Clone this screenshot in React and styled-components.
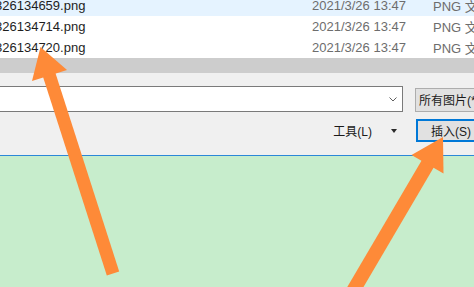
import React from "react";
import styled, { createGlobalStyle } from "styled-components";

const Global = createGlobalStyle`
  html, body { margin: 0; padding: 0; background: #c7edcc; }
  body { font-family: "Liberation Sans", "Noto Sans CJK SC", sans-serif; }
`;

const Screen = styled.div`
  position: relative;
  width: 474px;
  height: 287px;
  overflow: hidden;
  display: flex;
  flex-direction: column;
  background: #c7edcc;
`;

const FileList = styled.div`
  display: flex;
  flex-direction: column;
  margin-top: -5px;
  background: #ffffff;
`;

const Row = styled.div`
  display: grid;
  grid-template-columns: 312px 121px 1fr;
  height: 21px;
  align-items: center;
  font-size: 13px;
  white-space: nowrap;
  overflow: hidden;
  background: ${(p) => (p.$hover ? "#e5f3ff" : "#ffffff")};
`;

const NameCell = styled.span`
  color: #1e1e1e;
  margin-left: -5px;
  overflow: hidden;
`;

const InfoCell = styled.span`
  color: #6d6d6d;
  overflow: hidden;
`;

const HScroll = styled.div`
  height: 15px;
  background: #cdcdcd;
  flex-shrink: 0;
`;

const Panel = styled.div`
  display: flex;
  flex-direction: column;
  gap: 7px;
  padding: 13px 0 13px 0;
  background: #f0f0f0;
  border-bottom: 1px solid #2b88d8;
  flex-shrink: 0;
`;

const FieldRow = styled.div`
  display: flex;
  align-items: center;
  gap: 12px;
`;

const NameInput = styled.div`
  flex-shrink: 0;
  box-sizing: border-box;
  width: 405px;
  height: 26px;
  margin-left: -2px;
  background: #ffffff;
  border: 1px solid #7a7a7a;
  display: flex;
  align-items: center;
  justify-content: flex-end;
  padding-right: 5px;
`;

const FilterSelect = styled.div`
  flex-shrink: 0;
  box-sizing: border-box;
  width: 92px;
  height: 24px;
  margin-top: 1px;
  background: #e1e1e1;
  border: 1px solid #adadad;
  display: flex;
  align-items: center;
  padding-left: 3px;
  font-size: 12px;
  color: #1a1a1a;
  white-space: nowrap;
`;

const ActionRow = styled.div`
  display: flex;
  align-items: center;
  justify-content: flex-end;
  gap: 19px;
  height: 23px;
`;

const ToolsButton = styled.div`
  display: flex;
  align-items: center;
  gap: 19px;
  font-size: 12px;
  color: #1a1a1a;
`;

const Caret = styled.span`
  width: 0;
  height: 0;
  border-left: 3.5px solid transparent;
  border-right: 3.5px solid transparent;
  border-top: 4px solid #2a2a2a;
`;

const PrimaryButton = styled.div`
  flex-shrink: 0;
  box-sizing: border-box;
  width: 70px;
  height: 23px;
  margin-right: -12px;
  background: #e1e1e1;
  border: 2px solid #0078d7;
  display: flex;
  align-items: center;
  justify-content: center;
  font-size: 12px;
  color: #1a1a1a;
`;

const Canvas = styled.div`
  flex: 1;
  background: #c7edcc;
`;

const Overlay = styled.svg`
  position: absolute;
  left: 0;
  top: 0;
  pointer-events: none;
`;

const files = [
  { name: "326134659.png", hover: true },
  { name: "326134714.png" },
  { name: "326134720.png" },
];

function Chevron() {
  return (
    <svg width="8" height="5" viewBox="0 0 8 5">
      <polyline points="0.5,0.5 4,4 7.5,0.5" fill="none" stroke="#606060" strokeWidth="1" />
    </svg>
  );
}

export default function App() {
  return (
    <>
      <Global />
      <Screen>
        <FileList>
          {files.map((f) => (
            <Row key={f.name} $hover={f.hover}>
              <NameCell>{f.name}</NameCell>
              <InfoCell>2021/3/26 13:47</InfoCell>
              <InfoCell>PNG 文件</InfoCell>
            </Row>
          ))}
        </FileList>
        <HScroll />
        <Panel>
          <FieldRow>
            <NameInput>
              <Chevron />
            </NameInput>
            <FilterSelect>所有图片(*.emf;*.wmf;*.jpg)</FilterSelect>
          </FieldRow>
          <ActionRow>
            <ToolsButton>
              <span>工具(L)</span>
              <Caret />
            </ToolsButton>
            <PrimaryButton>插入(S)</PrimaryButton>
          </ActionRow>
        </Panel>
        <Canvas />
        <Overlay width="474" height="287" viewBox="0 0 474 287">
          <g fill="#fe8a38" stroke="none">
            <line x1="47" y1="68" x2="113" y2="273.5" stroke="#fe8a38" strokeWidth="13" />
            <polygon points="40.5,47 32,81 67,70" />
            <line x1="430" y1="160" x2="336" y2="320" stroke="#fe8a38" strokeWidth="14" />
            <polygon points="443,137 411.5,155 443.5,173.5" />
          </g>
        </Overlay>
      </Screen>
    </>
  );
}
